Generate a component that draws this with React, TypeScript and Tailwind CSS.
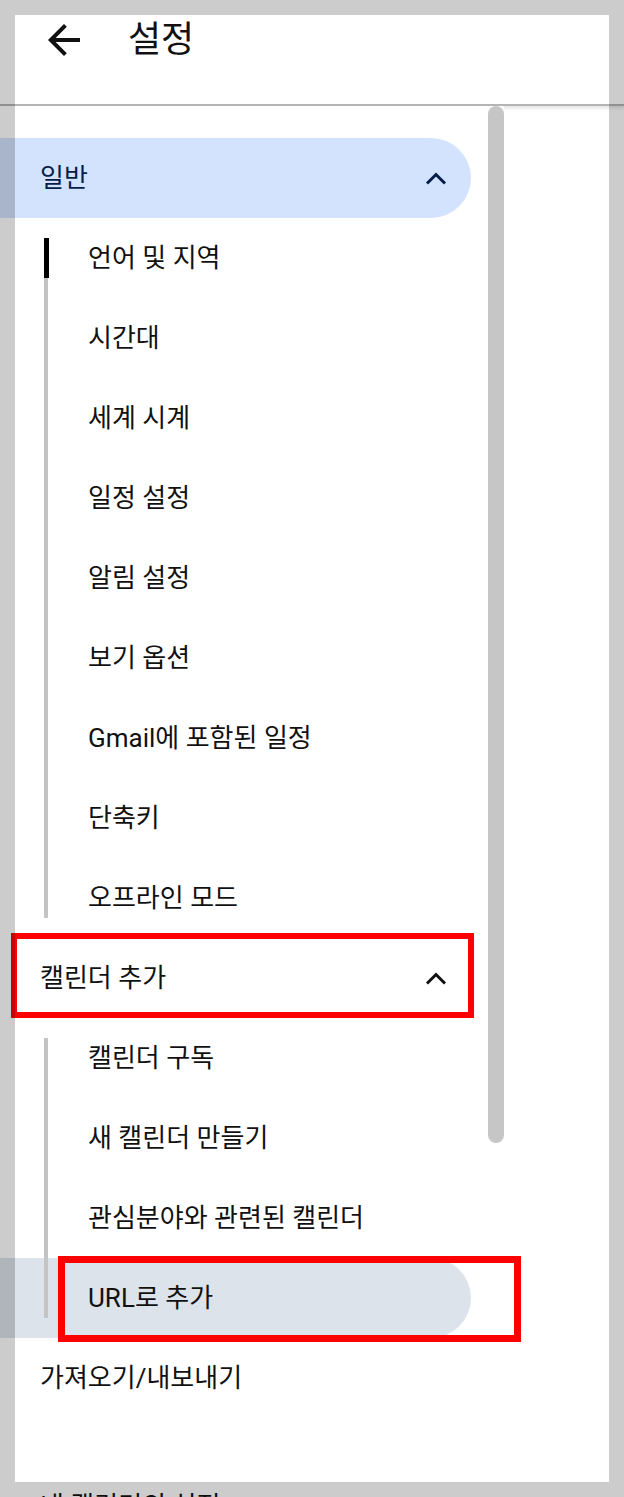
import React from 'react'

const generalItems = [
  '언어 및 지역',
  '시간대',
  '세계 시계',
  '일정 설정',
  '알림 설정',
  '보기 옵션',
  'Gmail에 포함된 일정',
  '단축키',
  '오프라인 모드',
]

const addCalendarItems = ['캘린더 구독', '새 캘린더 만들기', '관심분야와 관련된 캘린더', 'URL로 추가']

function ChevronUp() {
  return (
    <svg width="22" height="13" viewBox="0 0 22 13">
      <polyline points="2,11.5 11,2.5 20,11.5" fill="none" stroke="currentColor" strokeWidth="3" />
    </svg>
  )
}

function SectionRow({ title, active = false }: { title: string; active?: boolean }) {
  return (
    <div
      className={
        'h-[80px] w-[471px] rounded-r-full flex items-center justify-between pl-[40px] pr-[24px] text-[26px] ' +
        (active ? 'bg-[#d3e3fd] text-[#041e49]' : 'text-[#111]')
      }
    >
      <span>{title}</span>
      <ChevronUp />
    </div>
  )
}

function SubList({ items, activeIndex, selectedIndex }: { items: string[]; activeIndex?: number; selectedIndex?: number }) {
  return (
    <div className="relative">
      {items.map((item, i) => (
        <div
          key={item}
          className={
            'relative h-[80px] w-[471px] rounded-r-full flex items-center pl-[88px] text-[26px] text-[#111] ' +
            (i === selectedIndex ? 'bg-[#dde3ea]' : '')
          }
        >
          {item}
          {i === selectedIndex && (
            <div className="absolute left-[58px] top-[-2px] w-[463px] h-[86px] border-[7px] border-[#ff0000]" />
          )}
        </div>
      ))}
      {/* vertical guide line */}
      <div className="absolute left-[44px] top-[20px] bottom-[20px] w-[4px] bg-[#c4c4c4]" />
      {activeIndex !== undefined && (
        <div className="absolute left-[44px] top-[20px] h-[40px] w-[5px] bg-black" />
      )}
    </div>
  )
}

export default function App() {
  return (
    <div className="relative w-[624px] h-[1497px] overflow-hidden bg-white [font-family:Roboto,'Noto_Sans_CJK_KR',sans-serif]">
      {/* header */}
      <div className="h-[106px] pt-[16px] border-b-2 border-[#b5b5b5] shadow-[0_2px_4px_rgba(0,0,0,0.12)]">
        <div className="flex items-center h-[48px] pl-[40px]">
          <svg width="48" height="48" viewBox="0 0 24 24" className="text-[#111]">
            <path fill="currentColor" d="M20 11H7.83l5.59-5.59L12 4l-8 8 8 8 1.41-1.41L7.83 13H20v-2z" />
          </svg>
          <h1 className="ml-[40px] text-[36px] text-[#111] leading-none">설정</h1>
        </div>
      </div>

      {/* body */}
      <div className="flex">
        <nav className="w-[488px] bg-white pt-[32px]">
          <SectionRow title="일반" active />
          <SubList items={generalItems} activeIndex={0} />

          <div className="relative">
            <SectionRow title="캘린더 추가" />
            <div className="absolute left-[11px] top-[-5px] w-[463px] h-[85px] border-[6px] border-[#ff0000]" />
          </div>
          <SubList items={addCalendarItems} selectedIndex={3} />

          <div className="h-[80px] flex items-center pl-[40px] text-[26px] text-[#111]">가져오기/내보내기</div>
          <div className="mt-[48px] h-[80px] flex items-center pl-[40px] text-[26px] text-[#111]">내 캘린더의 설정</div>
        </nav>

        {/* scrollbar */}
        <div className="w-[16px] bg-white">
          <div className="h-[1037px] w-[16px] rounded-full bg-[#c6c6c6]" />
        </div>
      </div>

      {/* screenshot frame */}
      <div className="absolute left-0 top-0 w-full h-[15px] bg-black/20" />
      <div className="absolute left-0 bottom-0 w-full h-[15px] bg-black/20" />
      <div className="absolute left-0 top-[15px] bottom-[15px] w-[15px] bg-black/20" />
      <div className="absolute right-0 top-[15px] bottom-[15px] w-[15px] bg-black/20" />
    </div>
  )
}
